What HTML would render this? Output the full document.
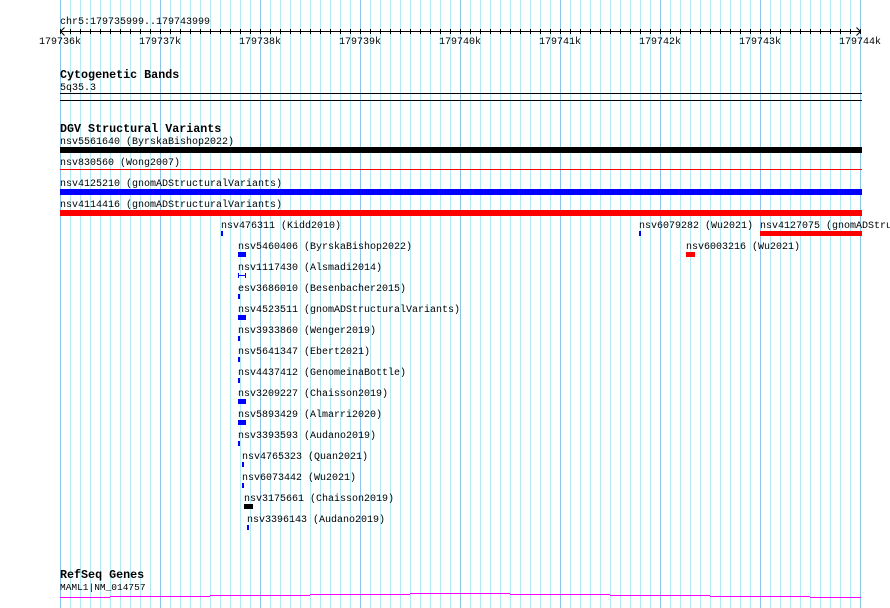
<!DOCTYPE html>
<html><head><meta charset="utf-8"><style>
html,body{margin:0;padding:0;background:#fff;width:890px;height:608px;overflow:hidden}
svg{display:block}
text{font-family:"Liberation Mono","DejaVu Sans Mono",monospace;font-size:10px;fill:#000}
.b{font-weight:bold;font-size:11.7px}
</style></head><body>
<svg width="890" height="608" xmlns="http://www.w3.org/2000/svg">
<defs>
<pattern id="minor" x="60" y="0" width="10" height="608" patternUnits="userSpaceOnUse">
<rect x="0" y="0" width="1" height="608" fill="#b0eaf2"/></pattern>
<pattern id="major" x="60" y="0" width="100" height="608" patternUnits="userSpaceOnUse">
<rect x="0" y="0" width="1" height="608" fill="#88c6ea"/></pattern>
<pattern id="tick" x="60" y="0" width="10" height="608" patternUnits="userSpaceOnUse">
<rect x="0" y="0" width="1" height="608" fill="#000"/></pattern>
</defs>
<rect x="60" y="0" width="801" height="608" fill="url(#minor)"/>
<rect x="60" y="0" width="801" height="608" fill="url(#major)"/>
<rect x="60" y="29" width="801" height="5" fill="url(#tick)"/>
<!-- ruler -->
<text x="60" y="24">chr5:179735999..179743999</text>
<rect x="60" y="31" width="801" height="1" fill="#000"/>
<path d="M64.5 27.5 L60.5 31.5 L64.5 35.5" stroke="#000" fill="none"/>
<path d="M856.5 27.5 L860.5 31.5 L856.5 35.5" stroke="#000" fill="none"/>
<g text-anchor="middle">
<text x="60" y="44">179736k</text><text x="160" y="44">179737k</text><text x="260" y="44">179738k</text>
<text x="360" y="44">179739k</text><text x="460" y="44">179740k</text><text x="560" y="44">179741k</text>
<text x="660" y="44">179742k</text><text x="760" y="44">179743k</text><text x="860" y="44">179744k</text>
</g>
<!-- cyto -->
<text class="b" x="60" y="78">Cytogenetic Bands</text>
<text x="60" y="90">5q35.3</text>
<rect x="60" y="93" width="802" height="1" fill="#000"/>
<rect x="60" y="100" width="802" height="1" fill="#000"/>
<!-- DGV -->
<text class="b" x="60" y="132">DGV Structural Variants</text>
<text x="60" y="144">nsv5561640 (ByrskaBishop2022)</text>
<rect x="60" y="147" width="802" height="6" fill="#000"/>
<text x="60" y="165">nsv830560 (Wong2007)</text>
<rect x="60" y="169" width="802" height="1" fill="#f00"/>
<text x="60" y="186">nsv4125210 (gnomADStructuralVariants)</text>
<rect x="60" y="189" width="802" height="6" fill="#00f"/>
<text x="60" y="207">nsv4114416 (gnomADStructuralVariants)</text>
<rect x="60" y="210" width="802" height="6" fill="#f00"/>

<text x="221" y="228">nsv476311 (Kidd2010)</text><rect x="221" y="231" width="2" height="5" fill="#00f"/>
<text x="639" y="228">nsv6079282 (Wu2021)</text><rect x="639" y="231" width="2" height="5" fill="#00f"/>
<text x="760" y="228">nsv4127075 (gnomADStructuralVariants)</text><rect x="760" y="231" width="102" height="5" fill="#f00"/>
<text x="686" y="249">nsv6003216 (Wu2021)</text><rect x="686" y="252" width="9" height="5" fill="#f00"/>

<text x="238" y="249">nsv5460406 (ByrskaBishop2022)</text><rect x="238" y="252" width="8" height="5" fill="#00f"/>
<text x="238" y="270">nsv1117430 (Alsmadi2014)</text>
<rect x="238" y="273" width="1" height="5" fill="#00f"/><rect x="245" y="273" width="1" height="5" fill="#00f"/><rect x="238" y="275" width="8" height="1" fill="#00f"/>
<text x="238" y="291">esv3686010 (Besenbacher2015)</text><rect x="238" y="294" width="2" height="5" fill="#00f"/>
<text x="238" y="312">nsv4523511 (gnomADStructuralVariants)</text><rect x="238" y="315" width="8" height="5" fill="#00f"/>
<text x="238" y="333">nsv3933860 (Wenger2019)</text><rect x="238" y="336" width="2" height="5" fill="#00f"/>
<text x="238" y="354">nsv5641347 (Ebert2021)</text><rect x="238" y="357" width="2" height="5" fill="#00f"/>
<text x="238" y="375">nsv4437412 (GenomeinaBottle)</text><rect x="238" y="378" width="2" height="5" fill="#00f"/>
<text x="238" y="396">nsv3209227 (Chaisson2019)</text><rect x="238" y="399" width="8" height="5" fill="#00f"/>
<text x="238" y="417">nsv5893429 (Almarri2020)</text><rect x="238" y="420" width="8" height="5" fill="#00f"/>
<text x="238" y="438">nsv3393593 (Audano2019)</text><rect x="238" y="441" width="2" height="5" fill="#00f"/>
<text x="242" y="459">nsv4765323 (Quan2021)</text><rect x="242" y="462" width="2" height="5" fill="#00f"/>
<text x="242" y="480">nsv6073442 (Wu2021)</text><rect x="242" y="483" width="2" height="5" fill="#00f"/>
<text x="244" y="501">nsv3175661 (Chaisson2019)</text><rect x="244" y="504" width="9" height="5" fill="#000"/>
<text x="247" y="522">nsv3396143 (Audano2019)</text><rect x="247" y="525" width="2" height="5" fill="#00f"/>

<!-- RefSeq -->
<text class="b" x="60" y="578">RefSeq Genes</text>
<text x="60" y="590" style="font-size:9.5px">MAML1|NM_014757</text>
<g fill="#f0f">
<rect x="60" y="597" width="50" height="1"/>
<rect x="110" y="596" width="100" height="1"/>
<rect x="210" y="595" width="100" height="1"/>
<rect x="310" y="594" width="100" height="1"/>
<rect x="410" y="593" width="100" height="1"/>
<rect x="510" y="594" width="100" height="1"/>
<rect x="610" y="595" width="100" height="1"/>
<rect x="710" y="596" width="100" height="1"/>
<rect x="810" y="597" width="51" height="1"/>
</g>
</svg>
</body></html>
